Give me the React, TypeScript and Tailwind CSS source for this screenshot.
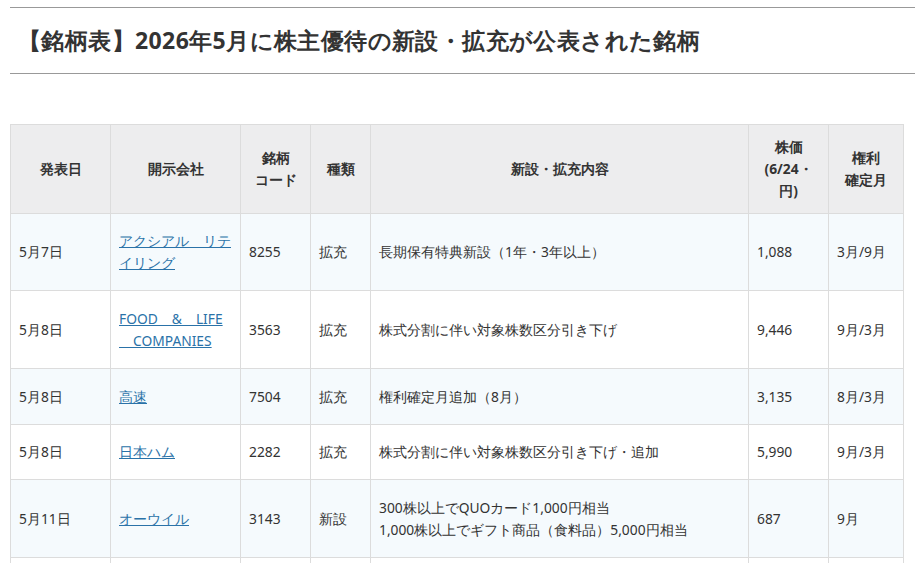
import React from "react";

const rows = [
  { d: "5月7日", c: ["アクシアル　リテ", "イリング"], code: "8255", t: "拡充", n: ["長期保有特典新設（1年・3年以上）"], p: "1,088", m: "3月/9月", h: "h-[77px]", bg: "bg-[#f5fafd]" },
  { d: "5月8日", c: ["FOOD　&　LIFE", "　COMPANIES"], code: "3563", t: "拡充", n: ["株式分割に伴い対象株数区分引き下げ"], p: "9,446", m: "9月/3月", h: "h-[78px]", bg: "bg-white" },
  { d: "5月8日", c: ["高速"], code: "7504", t: "拡充", n: ["権利確定月追加（8月）"], p: "3,135", m: "8月/3月", h: "h-[56px]", bg: "bg-[#f5fafd]" },
  { d: "5月8日", c: ["日本ハム"], code: "2282", t: "拡充", n: ["株式分割に伴い対象株数区分引き下げ・追加"], p: "5,990", m: "9月/3月", h: "h-[55px]", bg: "bg-white" },
  { d: "5月11日", c: ["オーウイル"], code: "3143", t: "新設", n: ["300株以上でQUOカード1,000円相当", "1,000株以上でギフト商品（食料品）5,000円相当"], p: "687", m: "9月", h: "h-[78px]", bg: "bg-[#f5fafd]" },
];

const td = "border border-[#dcdcdc] px-2 align-middle";

export default function App() {
  return (
    <div className="w-[915px] h-[563px] overflow-hidden bg-white text-[#333] font-['Noto_Sans_CJK_JP','Noto_Sans',sans-serif]">
      <div className="ml-[10px] mt-[7px] border-t border-b border-[#999] h-[67px] flex items-center pl-[8px]">
        <h1 className="text-[23px] font-bold tracking-[0.4px] whitespace-nowrap">【銘柄表】2026年5月に株主優待の新設・拡充が公表された銘柄</h1>
      </div>
      <table className="ml-[10px] mt-[50px] border-collapse text-[13.8px] leading-[22px]">
        <colgroup>
          <col className="w-[100px]" /><col className="w-[130px]" /><col className="w-[70px]" /><col className="w-[60px]" />
          <col className="w-[378px]" /><col className="w-[80px]" /><col className="w-[75px]" />
        </colgroup>
        <thead>
          <tr className="h-[89px] bg-[#ededee] font-bold text-center">
            <th className={td}>発表日</th>
            <th className={td}>開示会社</th>
            <th className={td}>銘柄<br />コード</th>
            <th className={td}>種類</th>
            <th className={td}>新設・拡充内容</th>
            <th className={td}>株価<br />(6/24・<br />円)</th>
            <th className={td}>権利<br />確定月</th>
          </tr>
        </thead>
        <tbody>
          {rows.map((r, i) => (
            <tr key={i} className={`${r.h} ${r.bg}`}>
              <td className={td}>{r.d}</td>
              <td className={td}>
                <a className="text-[#2a72a8] underline">{r.c.map((x, j) => <React.Fragment key={j}>{j > 0 && <br />}{x}</React.Fragment>)}</a>
              </td>
              <td className={td}>{r.code}</td>
              <td className={td}>{r.t}</td>
              <td className={`${td} whitespace-nowrap`}>{r.n.map((x, j) => <div key={j}>{x}</div>)}</td>
              <td className={td}>{r.p}</td>
              <td className={td}>{r.m}</td>
            </tr>
          ))}
          <tr className="h-[78px] bg-white">
            {[0, 1, 2, 3, 4, 5, 6].map((k) => <td key={k} className={td}></td>)}
          </tr>
        </tbody>
      </table>
    </div>
  );
}
